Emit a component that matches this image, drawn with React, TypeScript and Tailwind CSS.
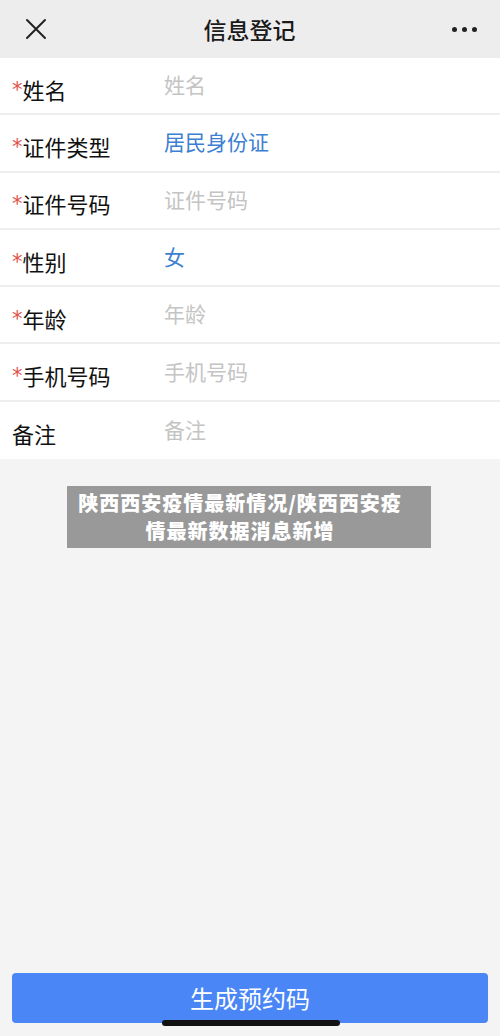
import React from "react";

const rows: { label: string; req: boolean; value: string; filled: boolean }[] = [
  { label: "姓名", req: true, value: "姓名", filled: false },
  { label: "证件类型", req: true, value: "居民身份证", filled: true },
  { label: "证件号码", req: true, value: "证件号码", filled: false },
  { label: "性别", req: true, value: "女", filled: true },
  { label: "年龄", req: true, value: "年龄", filled: false },
  { label: "手机号码", req: true, value: "手机号码", filled: false },
  { label: "备注", req: false, value: "备注", filled: false },
];

export default function App() {
  return (
    <div
      className="w-[500px] h-[1036px] bg-[#f4f4f4] flex flex-col relative overflow-hidden"
      style={{ fontFamily: '"Noto Sans CJK SC", "Noto Sans", sans-serif' }}
    >
      <div className="h-[58px] bg-[#ededed] flex items-center justify-between px-[24px] shrink-0">
        <svg width="22" height="22" viewBox="0 0 22 22" className="ml-[1px]">
          <path d="M2 2 L20 20 M20 2 L2 20" stroke="#222" strokeWidth="2" strokeLinecap="round" />
        </svg>
        <div className="text-[23px] text-[#1a1a1a] font-medium leading-none">信息登记</div>
        <div className="flex gap-[5px] mr-[-1px]">
          <span className="w-[5px] h-[5px] rounded-full bg-[#222]" />
          <span className="w-[5px] h-[5px] rounded-full bg-[#222]" />
          <span className="w-[5px] h-[5px] rounded-full bg-[#222]" />
        </div>
      </div>

      <div className="bg-white flex flex-col">
        {rows.map((r, i) => (
          <div
            key={i}
            className={`h-[57.3px] flex items-center ${i < rows.length - 1 ? "border-b-2 border-[#eeeeee]" : ""}`}
          >
            <div className="w-[164px] pl-[12px] flex items-center mt-[6px]">
              {r.req && (
                <span
                  className="text-[#e0524a] text-[21px] leading-none mt-[3px]"
                  style={{ fontFamily: '"DejaVu Sans", sans-serif' }}
                >
                  *
                </span>
              )}
              <span className="text-[22px] text-[#111] leading-none">{r.label}</span>
            </div>
            <div
              className={`text-[21px] leading-none mb-[2px] ${r.filled ? "text-[#3d7fd1]" : "text-[#c4c4c4]"}`}
            >
              {r.value}
            </div>
          </div>
        ))}
      </div>

      <div className="flex justify-center mt-[27px]">
        <div className="w-[364px] h-[62px] bg-[#999999] flex flex-col items-center justify-center text-white font-black text-[20px] tracking-[1px] leading-[28px] ml-[-2px]">
          <div className="pr-[18px]">陕西西安疫情最新情况/陕西西安疫</div>
          <div className="pr-[18px]">情最新数据消息新增</div>
        </div>
      </div>

      <div className="flex-1" />

      <div className="px-[12px] pb-[13px]">
        <div className="h-[50px] bg-[#4a86f6] rounded-[4px] flex items-center justify-center text-white text-[24px]">
          生成预约码
        </div>
      </div>

      <div className="absolute left-[162px] top-[1020px] w-[178px] h-[6px] rounded-full bg-[#111]" />
    </div>
  );
}
